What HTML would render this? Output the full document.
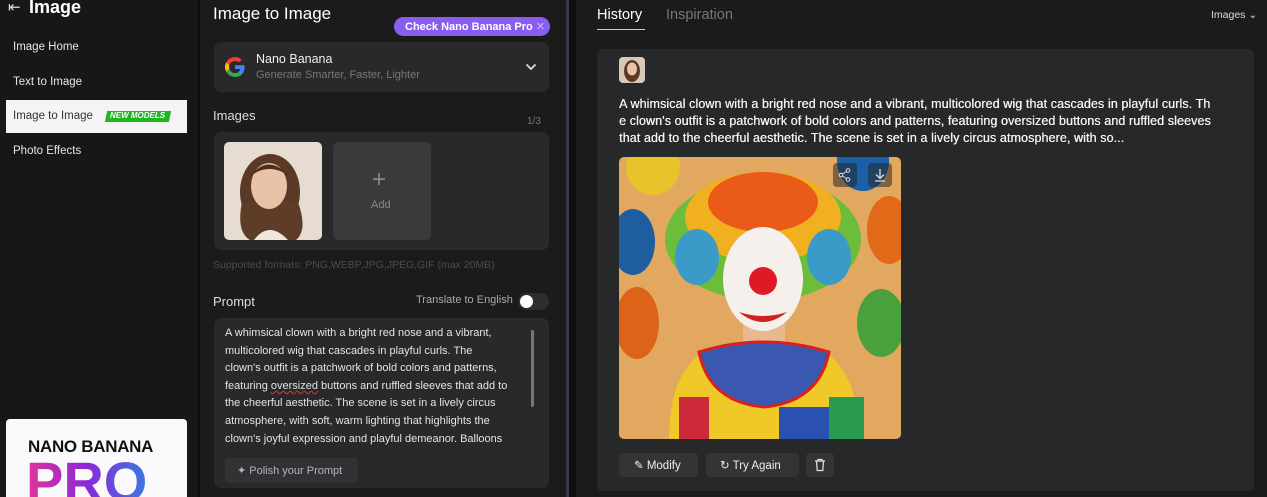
<!DOCTYPE html>
<html><head><meta charset="utf-8"><style>
*{margin:0;padding:0;box-sizing:border-box}
body{width:1267px;height:497px;overflow:hidden;background:#0e0e0e;font-family:"Liberation Sans",sans-serif;color:#e8e8e8;position:relative}
.a{position:absolute}
.side{left:0;top:0;width:198px;height:497px;background:#171717}
.mid{left:200px;top:0;width:366px;height:497px;background:#1b1b1b}
.right{left:576px;top:0;width:691px;height:497px;background:#1b1b1b}
.nav{left:13px;font-size:11.5px;color:#e6e6e6;white-space:nowrap}
.box{background:#29292b;border-radius:7px}
</style></head><body>
<div class="a side">
 <div class="a" style="left:8px;top:-2px;font-size:15px;color:#ddd">⇤</div>
 <div class="a" style="left:29px;top:-3px;font-size:18px;font-weight:bold;color:#fff">Image</div>
 <div class="a nav" style="top:41px">Image Home</div>
 <div class="a nav" style="top:76px">Text to Image</div>
 <div class="a" style="left:6px;top:100px;width:181px;height:33px;background:#f4f4f4"></div>
 <div class="a nav" style="top:110px;color:#333">Image to Image</div>
 <div class="a" style="left:106px;top:111px;width:64px;height:11px;background:#1fb51f;transform:skewX(-12deg)"></div>
 <div class="a" style="left:110px;top:111px;font-size:8px;font-weight:bold;font-style:italic;color:#fff;white-space:nowrap">NEW MODELS</div>
 <div class="a nav" style="top:145px">Photo Effects</div>
 <div class="a" style="left:6px;top:419px;width:181px;height:78px;background:#fafafc;border-radius:4px 4px 0 0;overflow:hidden">
  <div class="a" style="left:22px;top:18px;font-size:17px;font-weight:bold;color:#111;letter-spacing:-0.3px">NANO BANANA</div>
  <div class="a" style="left:20px;top:30px;font-size:56px;font-weight:bold;background:linear-gradient(90deg,#e0349a,#8a28d8,#3a78e0);-webkit-background-clip:text;color:transparent">PRO</div>
 </div>
</div>
<div class="a mid">
 <div class="a" style="left:13px;top:4px;font-size:17px;color:#fff">Image to Image</div>
 <div class="a" style="left:194px;top:17px;width:156px;height:19px;border-radius:10px;background:#8a5df0;font-size:11px;font-weight:bold;color:#fff;padding:3px 0 0 11px;white-space:nowrap">Check Nano Banana Pro <span style="color:#c9b6f8;font-weight:normal">✕</span></div>
 <div class="a box" style="left:14px;top:42px;width:335px;height:50px">
  <svg class="a" style="left:9px;top:13px" width="24" height="24" viewBox="0 0 24 24"><path d="M21.6 12.2c0-.7-.1-1.4-.2-2H12v3.8h5.4a4.6 4.6 0 0 1-2 3v2.5h3.2c1.9-1.7 3-4.3 3-7.3z" fill="#4285F4"/><path d="M12 22c2.7 0 5-.9 6.600-2.4l-3.2-2.5c-.9.6-2 1-3.4 1-2.6 0-4.8-1.8-5.6-4.1H3.1v2.6A10 10 0 0 0 12 22z" fill="#34A853"/><path d="M6.4 14a6 6 0 0 1 0-3.9V7.5H3.1a10 10 0 0 0 0 9z" fill="#FBBC05"/><path d="M12 6c1.5 0 2.8.5 3.8 1.5l2.9-2.9A10 10 0 0 0 3.1 7.5l3.3 2.6C7.2 7.8 9.4 6 12 6z" fill="#EA4335"/></svg>
  <div class="a" style="left:42px;top:10px;font-size:12.5px;color:#eee">Nano Banana</div>
  <div class="a" style="left:42px;top:27px;font-size:11px;color:#777">Generate Smarter, Faster, Lighter</div>
  <svg class="a" style="left:311px;top:21px" width="12" height="8"><path d="M1.5 1.5l4.5 4.5 4.5-4.5" stroke="#ddd" stroke-width="1.8" fill="none"/></svg>
 </div>
 <div class="a" style="left:13px;top:108px;font-size:13px;color:#ddd">Images</div>
 <div class="a" style="left:327px;top:116px;font-size:10px;color:#777">1/3</div>
 <div class="a box" style="left:14px;top:132px;width:335px;height:118px"></div>
 <div class="a" style="left:24px;top:142px;width:98px;height:98px;border-radius:5px;overflow:hidden;background:#e6dcd2">
  <svg width="98" height="98"><ellipse cx="46" cy="50" rx="30" ry="38" fill="#5a3a26"/><path d="M18 60q-6 30 8 38h46q12-10 2-38z" fill="#5e3d28"/><ellipse cx="45" cy="44" rx="18" ry="23" fill="#eac2a8"/><path d="M30 98q15-20 34 0z" fill="#f0e6dc"/><path d="M26 35q18-25 40 0q-10-8-20-8q-12 0-20 8z" fill="#4a2e1e"/></svg>
 </div>
 <div class="a" style="left:133px;top:142px;width:98px;height:98px;border-radius:6px;background:#3a3a3c">
  <div class="a" style="left:39px;top:24px;font-size:24px;font-weight:100;color:#888">+</div>
  <div class="a" style="left:38px;top:57px;font-size:11px;color:#888">Add</div>
 </div>
 <div class="a" style="left:13px;top:259px;font-size:10.5px;color:#4c4c4c">Supported formats: PNG,WEBP,JPG,JPEG,GIF (max 20MB)</div>
 <div class="a" style="left:13px;top:294px;font-size:13px;color:#ddd">Prompt</div>
 <div class="a" style="left:216px;top:294px;font-size:11px;color:#aaa">Translate to English</div>
 <div class="a" style="left:318px;top:293px;width:31px;height:17px;border-radius:9px;background:#2e2e30"><div class="a" style="left:2px;top:2px;width:13px;height:13px;border-radius:50%;background:#fff"></div></div>
 <div class="a box" style="left:14px;top:318px;width:335px;height:170px">
  <div class="a" style="left:11px;top:7px;width:285px;font-size:11px;line-height:17.6px;color:#e4e4e4">A whimsical clown with a bright red nose and a vibrant, multicolored wig that cascades in playful curls. The clown's outfit is a patchwork of bold colors and patterns, featuring <span style="text-decoration:underline wavy #c33">oversized</span> buttons and ruffled sleeves that add to the cheerful aesthetic. The scene is set in a lively circus atmosphere, with soft, warm lighting that highlights the clown's joyful expression and playful demeanor. Balloons</div>
  <div class="a" style="left:317px;top:12px;width:3px;height:77px;background:#777;border-radius:2px"></div>
  <div class="a" style="left:11px;top:140px;width:133px;height:25px;border-radius:4px;background:#323234;font-size:11px;color:#b8b0c8;padding:6px 0 0 12px">✦ Polish your Prompt</div>
 </div>
</div>
<div class="a" style="left:566px;top:0;width:3px;height:497px;background:#3a3748"></div>
<div class="a right">
 <div class="a" style="left:21px;top:7px;font-size:14.5px;color:#fff">History</div>
 <div class="a" style="left:21px;top:29px;width:48px;height:1px;background:#ccc"></div>
 <div class="a" style="left:90px;top:7px;font-size:14.5px;color:#777">Inspiration</div>
 <div class="a" style="left:635px;top:9px;font-size:10.5px;color:#ddd;white-space:nowrap">Images ⌄</div>
 <div class="a" style="left:21px;top:49px;width:657px;height:442px;background:#27282a;border-radius:5px">
  <div class="a" style="left:22px;top:8px;width:26px;height:26px;border-radius:4px;background:#d8c8b8;overflow:hidden"><svg width="26" height="26"><ellipse cx="13" cy="14" rx="8" ry="11" fill="#5a3a26"/><ellipse cx="13" cy="12" rx="5" ry="6.5" fill="#eac2a8"/></svg></div>
  <div class="a" style="left:22px;top:47px;width:592px;font-size:12.5px;line-height:17px;color:#f4f4f4;word-break:break-all;letter-spacing:0.1px;text-shadow:0.3px 0 0 #f4f4f4">A whimsical clown with a bright red nose and a vibrant, multicolored wig that cascades in playful curls. The clown's outfit is a patchwork of bold colors and patterns, featuring oversized buttons and ruffled sleeves that add to the cheerful aesthetic. The scene is set in a lively circus atmosphere, with so...</div>
  <div class="a" style="left:22px;top:108px;width:282px;height:282px;border-radius:5px;overflow:hidden">
   <svg width="282" height="282" viewBox="0 0 282 282">
    <rect width="282" height="282" fill="#e3a860"/>
    <ellipse cx="34" cy="10" rx="27" ry="28" fill="#e8c22a"/>
    <ellipse cx="244" cy="4" rx="26" ry="30" fill="#1a5fa8"/>
    <ellipse cx="14" cy="85" rx="22" ry="33" fill="#1e5e9e"/>
    <ellipse cx="18" cy="166" rx="22" ry="36" fill="#dc6418"/>
    <ellipse cx="270" cy="73" rx="22" ry="34" fill="#e06a18"/>
    <ellipse cx="262" cy="166" rx="24" ry="34" fill="#4aa03c"/>
    <ellipse cx="144" cy="82" rx="98" ry="62" fill="#6cbe3a"/>
    <ellipse cx="144" cy="60" rx="78" ry="45" fill="#f0b020"/>
    <ellipse cx="144" cy="45" rx="55" ry="30" fill="#ea5a18"/>
    <ellipse cx="78" cy="100" rx="22" ry="28" fill="#3a9ac8"/>
    <ellipse cx="210" cy="100" rx="22" ry="28" fill="#3a9ac8"/>
    <rect x="124" y="160" width="42" height="40" fill="#e8b890"/>
    <ellipse cx="144" cy="122" rx="40" ry="52" fill="#f6f0ec"/>
    <path d="M120 155q24 20 48 0q-24 8-48 0z" fill="#d02020"/>
    <circle cx="144" cy="124" r="14" fill="#e01a24"/>
    <path d="M50 282q0-70 40-90h110q40 20 40 90z" fill="#f0c828"/>
    <path d="M80 195q64 -20 130 0q-10 50-65 55q-55-5-65-55z" fill="#3a58b0" stroke="#d82020" stroke-width="3"/>
    <rect x="160" y="250" width="60" height="32" fill="#2a50b0"/>
    <rect x="60" y="240" width="30" height="42" fill="#cc2a3a"/>
    <rect x="210" y="240" width="35" height="42" fill="#2a9a50"/>
   </svg>
   <div class="a" style="left:214px;top:6px;width:24px;height:24px;border-radius:4px;background:rgba(40,40,40,.55)"><svg width="24" height="24"><circle cx="15" cy="7.5" r="1.8" stroke="#ddd" fill="none"/><circle cx="8" cy="12" r="1.8" stroke="#ddd" fill="none"/><circle cx="15" cy="16.5" r="1.8" stroke="#ddd" fill="none"/><path d="M9.5 11l4-2.5M9.5 13l4 2.5" stroke="#ddd"/></svg></div>
   <div class="a" style="left:249px;top:6px;width:24px;height:24px;border-radius:4px;background:rgba(40,40,40,.55)"><svg width="24" height="24"><path d="M12 6v9M8 11.5l4 4 4-4M7 18h10" stroke="#ddd" stroke-width="1.3" fill="none"/></svg></div>
  </div>
  <div class="a" style="left:22px;top:404px;width:79px;height:24px;border-radius:4px;background:#333436;font-size:11.5px;color:#eee;padding:5px 0 0 15px">✎ Modify</div>
  <div class="a" style="left:109px;top:404px;width:93px;height:24px;border-radius:4px;background:#333436;font-size:11.5px;color:#eee;padding:5px 0 0 14px">↻ Try Again</div>
  <div class="a" style="left:209px;top:404px;width:28px;height:24px;border-radius:4px;background:#333436">
   <svg class="a" style="left:8px;top:5px" width="12" height="14"><path d="M1 3h10M4 3V1.5h4V3M2.5 3l.7 9.5h5.6L9.5 3" stroke="#ddd" stroke-width="1.3" fill="none"/></svg>
  </div>
 </div>
</div>
</body></html>
